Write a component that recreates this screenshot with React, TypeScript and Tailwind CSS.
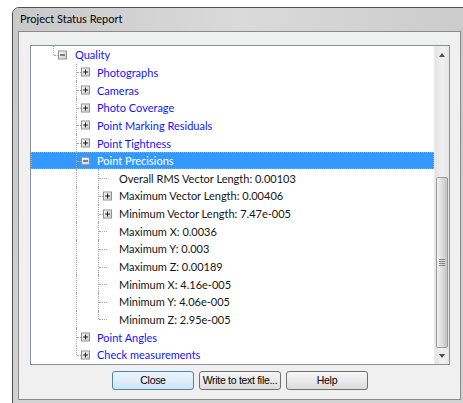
import React from 'react'

type Kind = 'plus' | 'minus' | 'leaf'

interface TreeRow {
  label: string
  level: 1 | 2 | 3
  kind: Kind
  last?: boolean
  link?: boolean
  selected?: boolean
}

const rows: TreeRow[] = [
  { label: 'Quality', level: 1, kind: 'minus', last: true, link: true },
  { label: 'Photographs', level: 2, kind: 'plus', link: true },
  { label: 'Cameras', level: 2, kind: 'plus', link: true },
  { label: 'Photo Coverage', level: 2, kind: 'plus', link: true },
  { label: 'Point Marking Residuals', level: 2, kind: 'plus', link: true },
  { label: 'Point Tightness', level: 2, kind: 'plus', link: true },
  { label: 'Point Precisions', level: 2, kind: 'minus', link: true, selected: true },
  { label: 'Overall RMS Vector Length: 0.00103', level: 3, kind: 'leaf' },
  { label: 'Maximum Vector Length: 0.00406', level: 3, kind: 'plus' },
  { label: 'Minimum Vector Length: 7.47e-005', level: 3, kind: 'plus' },
  { label: 'Maximum X: 0.0036', level: 3, kind: 'leaf' },
  { label: 'Maximum Y: 0.003', level: 3, kind: 'leaf' },
  { label: 'Maximum Z: 0.00189', level: 3, kind: 'leaf' },
  { label: 'Minimum X: 4.16e-005', level: 3, kind: 'leaf' },
  { label: 'Minimum Y: 4.06e-005', level: 3, kind: 'leaf' },
  { label: 'Minimum Z: 2.95e-005', level: 3, kind: 'leaf', last: true },
  { label: 'Point Angles', level: 2, kind: 'plus', link: true },
  { label: 'Check measurements', level: 2, kind: 'plus', link: true, last: true },
]

// connector / expander / label offsets per level
const lineLeft = { 1: 'left-[22px]', 2: 'left-[45px]', 3: 'left-[67px]' }
const stubLeft = { 1: 'left-[23px]', 2: 'left-[46px]', 3: 'left-[68px]' }
const boxLeft = { 1: 'left-[27px]', 2: 'left-[50px]', 3: 'left-[72px]' }
const textPad = { 1: 'pl-[44px]', 2: 'pl-[66px]', 3: 'pl-[88px]' }

function Expander({ kind }: { kind: Kind }) {
  return (
    <span className="absolute top-1/2 -translate-y-1/2 w-[9px] h-[9px] border border-[#8e8f8f] bg-gradient-to-br from-[#f7f7f7] to-[#cfcfcf] flex items-center justify-center">
      <span className="absolute w-[5px] h-px bg-[#1e1e1e]" />
      {kind === 'plus' && <span className="absolute w-px h-[5px] bg-[#1e1e1e]" />}
    </span>
  )
}

function Row({ row }: { row: TreeRow }) {
  const { level, kind, last, selected, link } = row
  return (
    <div
      className={`relative h-[17.65px] flex items-center shrink-0 ${textPad[level]} ${
        selected ? 'bg-[#3399ff] outline outline-1 outline-dotted outline-offset-[-1px] outline-[#c9a070]' : ''
      }`}
    >
      {/* level-2 rail passes through the expanded children */}
      {level === 3 && <span className={`absolute top-0 bottom-0 ${lineLeft[2]} border-l border-dotted border-[#a5a5a5]`} />}
      <span
        className={`absolute top-0 ${last ? 'h-1/2' : 'bottom-0'} ${lineLeft[level]} border-l border-dotted border-[#a5a5a5]`}
      />
      <span className={`absolute top-1/2 ${stubLeft[level]} w-[8px] border-t border-dotted border-[#a5a5a5]`} />
      {kind !== 'leaf' && (
        <span className={`absolute top-0 bottom-0 ${boxLeft[level]} w-[9px]`}>
          <Expander kind={kind} />
        </span>
      )}
      <span
        className={`whitespace-nowrap leading-none ${
          selected ? 'text-white' : link ? 'text-[#1414ff]' : 'text-[#141414]'
        }`}
      >
        {row.label}
      </span>
    </div>
  )
}

function ScrollBar() {
  return (
    <div className="w-[15px] shrink-0 flex flex-col bg-gradient-to-r from-[#e4e4e4] via-[#f0f0f0] to-[#e8e8e8] border-l border-[#e9e9e9]">
      <div className="h-[17px] flex items-center justify-center">
        <span className="w-0 h-0 border-x-[3.5px] border-x-transparent border-b-[4px] border-b-[#505050]" />
      </div>
      <div className="h-[114px]" />
      <div className="h-[171px] mx-[1px] rounded-[2px] border border-[#9a9a9a] bg-gradient-to-r from-[#f2f2f2] via-[#dcdcdc] to-[#c5c5c5] flex flex-col items-center justify-center gap-[1px]">
        <span className="w-[6px] h-px bg-[#8a8a8a]" />
        <span className="w-[6px] h-px bg-[#8a8a8a]" />
        <span className="w-[6px] h-px bg-[#8a8a8a]" />
        <span className="w-[6px] h-px bg-[#8a8a8a]" />
      </div>
      <div className="flex-1 flex items-center justify-center">
        <span className="w-0 h-0 border-x-[3.5px] border-x-transparent border-t-[4px] border-t-[#505050]" />
      </div>
    </div>
  )
}

function DialogButton({ label, primary }: { label: string; primary?: boolean }) {
  return (
    <button
      className={`w-[82px] h-[19px] px-0 rounded-[3px] border text-[10.5px] tracking-[-0.3px] leading-none whitespace-nowrap text-black bg-gradient-to-b ${
        primary
          ? 'border-[#4a86b8] from-[#eaf4fb] via-[#e0eef9] to-[#cfe4f4]'
          : 'border-[#707070] from-[#f6f6f6] via-[#eaeaea] to-[#dcdcdc]'
      }`}
      style={{ fontFamily: '"Liberation Sans", Arial, sans-serif' }}
    >
      {label}
    </button>
  )
}

export default function App() {
  return (
    <div
      className="w-[463px] h-[403px] bg-white overflow-hidden pt-[7px] pl-[12px]"
      style={{ fontFamily: 'Lato, "Open Sans", sans-serif' }}
    >
      <div className="w-[461px] h-[400px] rounded-tl-[7px] border border-[#4f4f4f] bg-gradient-to-b from-[#c8c8c8] to-[#d2d2d2] flex flex-col">
        {/* Title bar */}
        <div className="h-[23px] shrink-0 flex items-center pl-[7px] text-[11px] text-black bg-gradient-to-r from-[#c9c9c9] via-[#dadada] to-[#cbcbcb] rounded-tl-[6px]">
          Project Status Report
        </div>

        {/* Client area */}
        <div className="ml-[5px] w-[443px] h-[369px] border border-[#8a8a8a] bg-[#f0f0f0] flex flex-col pt-[13px] pl-[11px] pr-[10px]">
          <div className="h-[320px] border border-[#8c9097] bg-white flex">
            <div className="flex-1 flex flex-col text-[11px] overflow-hidden">
              {rows.map((r) => (
                <Row key={r.label} row={r} />
              ))}
            </div>
            <ScrollBar />
          </div>

          <div className="mt-[6px] flex justify-center gap-[5px]">
            <DialogButton label="Close" primary />
            <DialogButton label="Write to text file..." />
            <DialogButton label="Help" />
          </div>
        </div>
      </div>
    </div>
  )
}
